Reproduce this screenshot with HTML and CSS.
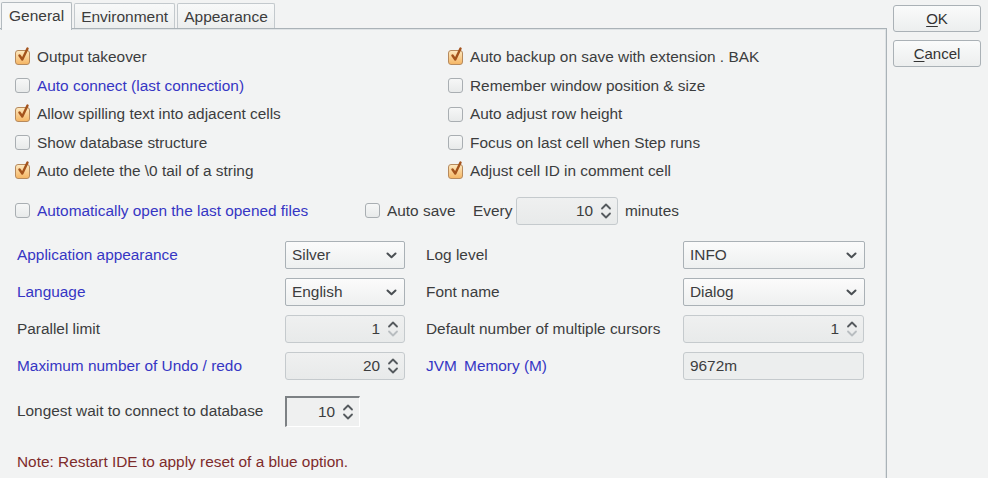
FILE: index.html
```html
<!DOCTYPE html>
<html>
<head>
<meta charset="utf-8">
<link rel="stylesheet" href="styles.css">
</head>
<body>
<div class="dialog">
  <div class="main">
    <div class="tabs">
      <div class="tab active">General</div>
      <div class="tab">Environment</div>
      <div class="tab">Appearance</div>
      <div class="tab-fill"></div>
    </div>
    <div class="panel">
      <div class="checks">
        <label class="chk"><span class="box on"></span>Output takeover</label>
        <label class="chk"><span class="box on"></span>Auto backup on save with extension . BAK</label>
        <label class="chk blue"><span class="box"></span>Auto connect (last connection)</label>
        <label class="chk"><span class="box"></span>Remember window position &amp; size</label>
        <label class="chk"><span class="box on"></span>Allow spilling text into adjacent cells</label>
        <label class="chk"><span class="box"></span>Auto adjust row height</label>
        <label class="chk"><span class="box"></span>Show database structure</label>
        <label class="chk"><span class="box"></span>Focus on last cell when Step runs</label>
        <label class="chk"><span class="box on"></span>Auto delete the \0 tail of a string</label>
        <label class="chk"><span class="box on"></span>Adjust cell ID in comment cell</label>
      </div>

      <div class="autorow">
        <label class="chk blue open"><span class="box"></span>Automatically open the last opened files</label>
        <label class="chk save"><span class="box"></span>Auto save</label>
        <span class="every">Every</span>
        <div class="spin every-spin"><span class="val">10</span><span class="arrows"></span></div>
        <span class="minutes">minutes</span>
      </div>

      <div class="form">
        <span class="lbl blue">Application appearance</span>
        <div class="combo">Silver<span class="chev"></span></div>
        <span class="lbl r">Log level</span>
        <div class="combo">INFO<span class="chev"></span></div>

        <span class="lbl blue">Language</span>
        <div class="combo">English<span class="chev"></span></div>
        <span class="lbl r">Font name</span>
        <div class="combo">Dialog<span class="chev"></span></div>

        <span class="lbl">Parallel limit</span>
        <div class="spin"><span class="val">1</span><span class="arrows dis"></span></div>
        <span class="lbl r">Default number of multiple cursors</span>
        <div class="spin wide"><span class="val">1</span><span class="arrows dis"></span></div>

        <span class="lbl blue">Maximum number of Undo / redo</span>
        <div class="spin"><span class="val">20</span><span class="arrows"></span></div>
        <span class="lbl r blue"><span class="jvm">JVM</span> Memory (M)</span>
        <div class="field">9672m</div>
      </div>

      <div class="waitrow">
        <span class="lbl">Longest wait to connect to database</span>
        <div class="spin sunken"><span class="val">10</span><span class="arrows"></span></div>
      </div>

      <div class="note">Note: Restart IDE to apply reset of a blue option.</div>
    </div>
  </div>
  <div class="buttons">
    <button class="btn"><u>O</u>K</button>
    <button class="btn"><u>C</u>ancel</button>
  </div>
</div>
</body>
</html>
```
FILE: styles.css
```css
* { box-sizing: border-box; }
html, body {
  margin: 0;
  padding: 0;
  background: #f2f3f3;
  width: 988px;
  height: 478px;
  overflow: hidden;
}
body {
  font-family: "Liberation Sans", Arial, sans-serif;
  font-size: 15.4px;
  color: #3c3d3e;
}
.dialog {
  display: flex;
  align-items: flex-start;
}
.main {
  width: 887px;
  padding-top: 2px;
}
.tabs {
  display: flex;
  align-items: flex-end;
  height: 26px;
  padding-left: 1px;
}
.tab {
  height: 25px;
  padding: 0 6px;
  margin-right: 2px;
  border: 1px solid #c3c9cd;
  border-bottom: none;
  border-radius: 2px 2px 0 0;
  background: linear-gradient(#f8f9f9, #eceeee);
  line-height: 25px;
  font-size: 15.5px;
  color: #3c3c3c;
}
.tab.active {
  background: #f6f7f7;
  border-color: #b3babf;
  position: relative;
  z-index: 1;
  margin-bottom: -2px;
  height: 28px;
  padding: 0 7px;
}
.tab-fill { flex: 1; }
.panel {
  border-top: 1px solid #aab2b7;
  border-right: 1px solid #aab2b7;
  box-shadow: inset 0 1px 0 #dfe3e5, inset -1px 0 0 #dfe3e5;
  height: 450px;
  padding-top: 14px;
}
.checks {
  display: grid;
  grid-template-columns: 433px 1fr;
  grid-auto-rows: 28.5px;
  padding-left: 15px;
}
.chk {
  display: flex;
  align-items: center;
  white-space: nowrap;
}
.box {
  width: 15px;
  height: 15px;
  flex: none;
  margin-right: 7px;
  border: 1px solid #a9aeb2;
  border-radius: 3px;
  background: linear-gradient(#f6f7f7, #e8eaea);
  position: relative;
}
.box.on {
  border-color: #b78a5d;
  background: linear-gradient(#fde8bf, #f5b665);
}
.box.on::after {
  content: "";
  position: absolute;
  left: 2px;
  top: -4px;
  width: 11px;
  height: 15px;
  background: url("data:image/svg+xml;utf8,<svg xmlns='http://www.w3.org/2000/svg' width='11' height='15' viewBox='0 0 11 15'><path d='M1.5 8.5 L4.3 12.5 L9.5 1.5' fill='none' stroke='%23a4531c' stroke-width='2.4' stroke-linecap='round' stroke-linejoin='round'/></svg>") no-repeat;
}
.blue { color: #3636c4; }
.autorow {
  display: flex;
  align-items: center;
  height: 28px;
  margin-top: 11px;
  padding-left: 15px;
}
.autorow .open { width: 350px; }
.autorow .save { width: 108px; }
.every { width: 43px; }
.every-spin { width: 102px; }
.minutes { margin-left: 7px; }
.spin {
  height: 28px;
  border: 1px solid #c5cacd;
  border-radius: 3px;
  background: linear-gradient(#eff0f0, #e8eaea);
  display: flex;
  align-items: center;
  justify-content: flex-end;
  padding-right: 5px;
}
.spin .val { margin-right: 7px; }
.arrows {
  width: 12px;
  height: 20px;
  background: url("data:image/svg+xml;utf8,<svg xmlns='http://www.w3.org/2000/svg' width='12' height='20' viewBox='0 0 12 20'><path d='M2 7.5 L6 3.5 L10 7.5' fill='none' stroke='%23555a5e' stroke-width='1.8' stroke-linecap='round' stroke-linejoin='round'/><path d='M2 12.5 L6 16.5 L10 12.5' fill='none' stroke='%23555a5e' stroke-width='1.8' stroke-linecap='round' stroke-linejoin='round'/></svg>") no-repeat;
}
.arrows.dis {
  background: url("data:image/svg+xml;utf8,<svg xmlns='http://www.w3.org/2000/svg' width='12' height='20' viewBox='0 0 12 20'><path d='M2 7.5 L6 3.5 L10 7.5' fill='none' stroke='%23555a5e' stroke-width='1.8' stroke-linecap='round' stroke-linejoin='round'/><path d='M2 12.5 L6 16.5 L10 12.5' fill='none' stroke='%23b8bdc0' stroke-width='1.8' stroke-linecap='round' stroke-linejoin='round'/></svg>") no-repeat;
}
.form {
  display: grid;
  grid-template-columns: 268px 120px 278px 182px;
  grid-template-rows: 28px 28px 28px 28px;
  row-gap: 9px;
  align-items: center;
  margin-top: 16px;
  padding-left: 17px;
}
.lbl { white-space: nowrap; }
.lbl.r { padding-left: 21px; }
.jvm { margin-right: 3px; }
.combo {
  height: 28px;
  border: 1px solid #aab1b6;
  border-radius: 2px;
  background: linear-gradient(#fbfbfb, #eef0f0);
  display: flex;
  align-items: center;
  padding-left: 6px;
  position: relative;
}
.chev {
  position: absolute;
  right: 7px;
  top: 10px;
  width: 11px;
  height: 7px;
  background: url("data:image/svg+xml;utf8,<svg xmlns='http://www.w3.org/2000/svg' width='11' height='7' viewBox='0 0 11 7'><path d='M1.5 1.5 L5.5 5.3 L9.5 1.5' fill='none' stroke='%234a4f53' stroke-width='2' stroke-linecap='round' stroke-linejoin='round'/></svg>") no-repeat;
}
.field {
  height: 28px;
  border: 1px solid #c5cacd;
  border-radius: 3px;
  background: #eceeee;
  display: flex;
  align-items: center;
  padding-left: 6px;
  width: 181px;
}
.spin.wide { width: 181px; }
.waitrow {
  display: grid;
  grid-template-columns: 268px 75px;
  align-items: center;
  padding-left: 17px;
  margin-top: 16px;
}
.spin.sunken {
  height: 31px;
  border-radius: 0;
  border-top: 2px solid #7d8184;
  border-left: 2px solid #7d8184;
  border-right: 1px solid #ffffff;
  border-bottom: 1px solid #ffffff;
  background: #eff0f0;
}
.note {
  color: #7e2b2b;
  padding-left: 17px;
  margin-top: 26px;
}
.buttons {
  display: flex;
  flex-direction: column;
  gap: 8px;
  padding-top: 5px;
  padding-left: 6px;
}
.btn {
  width: 88px;
  height: 27px;
  border: 1px solid #aab1b6;
  border-radius: 3px;
  background: linear-gradient(#fafbfb, #eceeee);
  font-family: "Liberation Sans", Arial, sans-serif;
  font-size: 15px;
  color: #333;
  padding: 0;
}
.btn u { text-decoration-thickness: 1px; text-underline-offset: 2px; }
```
